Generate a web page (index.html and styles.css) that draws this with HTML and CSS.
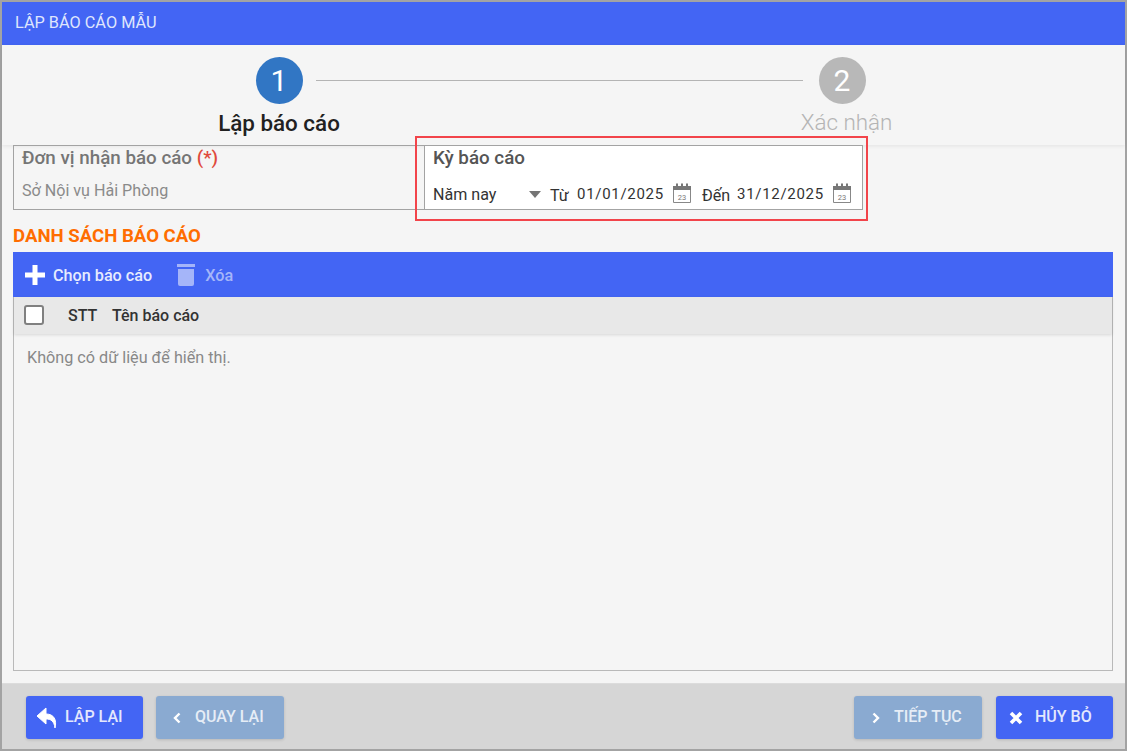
FILE: index.html
```html
<!DOCTYPE html>
<html lang="vi">
<head>
<meta charset="utf-8">
<title>Lập báo cáo mẫu</title>
<link rel="stylesheet" href="styles.css">
</head>
<body>
<div class="dialog">
  <header class="title-bar">LẬP BÁO CÁO MẪU</header>
  <section class="stepper">
    <div class="step step-one">
      <span class="badge badge-active">1</span>
      <span class="step-label step-label-active">Lập báo cáo</span>
    </div>
    <div class="step-line"></div>
    <div class="step step-two">
      <span class="badge badge-idle">2</span>
      <span class="step-label step-label-idle">Xác nhận</span>
    </div>
  </section>
  <main class="content">
    <div class="fields">
      <div class="field field-unit">
        <div class="field-title muted-title">Đơn vị nhận báo cáo <span class="required">(*)</span></div>
        <div class="unit-value">Sở Nội vụ Hải Phòng</div>
      </div>
      <div class="field field-period">
        <div class="field-title">Kỳ báo cáo</div>
        <div class="period-row">
          <span class="period-select">Năm nay</span>
          <span class="caret"></span>
          <span class="date-label label-from">Từ</span>
          <span class="date-value">01/01/2025</span>
          <svg class="cal" viewBox="0 0 20 20" width="20" height="20"><path d="M1.500 3.500h17v16h-17z" fill="#fff" stroke="#888" stroke-width="1"/><path d="M1 3h18v4H1z" fill="#777"/><path d="M5 0.500v3M10 0.500v3M15 0.500v3" stroke="#777" stroke-width="2"/><text x="10" y="16.500" class="cal-text">23</text></svg>
          <span class="date-label label-to">Đến</span>
          <span class="date-value">31/12/2025</span>
          <svg class="cal" viewBox="0 0 20 20" width="20" height="20"><path d="M1.500 3.500h17v16h-17z" fill="#fff" stroke="#888" stroke-width="1"/><path d="M1 3h18v4H1z" fill="#777"/><path d="M5 0.500v3M10 0.500v3M15 0.500v3" stroke="#777" stroke-width="2"/><text x="10" y="16.500" class="cal-text">23</text></svg>
        </div>
      </div>
      <div class="highlight"></div>
    </div>
    <h2 class="section-title">DANH SÁCH BÁO CÁO</h2>
    <div class="grid">
      <div class="toolbar">
        <span class="tool">
          <svg viewBox="0 0 20 20" width="20" height="20"><path d="M7.500 0h5v7.500H20v5h-7.500V20h-5v-7.500H0v-5h7.500z" fill="#fff"/></svg>
          <span>Chọn báo cáo</span>
        </span>
        <span class="tool tool-disabled">
          <svg viewBox="0 0 18 22" width="18" height="22"><path d="M0 0h18v3H0z" fill="#a5b5f9"/><path d="M1 5h16v15a2 2 0 0 1-2 2H3a2 2 0 0 1-2-2z" fill="#a5b5f9"/></svg>
          <span>Xóa</span>
        </span>
      </div>
      <div class="grid-head">
        <span class="checkbox"></span>
        <span class="col-stt">STT</span>
        <span class="col-name">Tên báo cáo</span>
      </div>
      <div class="grid-empty">Không có dữ liệu để hiển thị.</div>
    </div>
  </main>
  <footer class="footer">
    <div class="btn-group">
      <button class="btn btn-primary btn-reset">
        <svg viewBox="0 0 20 22" width="20" height="22"><path d="M9 1 0 9l9 8v-5c5 0 8 2 9 9 2-8-1-14-9-14z" fill="#fff" stroke="#fff" stroke-linejoin="round"/></svg>
        <span>LẬP LẠI</span>
      </button>
      <button class="btn btn-muted btn-back">
        <svg viewBox="0 0 8 12" width="8" height="12"><path d="M6.500 1.500 2 6l4.500 4.500" fill="none" stroke="#fff" stroke-width="2.400"/></svg>
        <span>QUAY LẠI</span>
      </button>
    </div>
    <div class="btn-group btn-group-right">
      <button class="btn btn-muted btn-next">
        <svg viewBox="0 0 8 12" width="8" height="12"><path d="M1.500 1.500 6 6l-4.500 4.500" fill="none" stroke="#fff" stroke-width="2.400"/></svg>
        <span>TIẾP TỤC</span>
      </button>
      <button class="btn btn-primary btn-cancel">
        <svg viewBox="0 0 14 14" width="14" height="14"><path d="M2 2l10 10M12 2 2 12" fill="none" stroke="#fff" stroke-width="3.600"/></svg>
        <span>HỦY BỎ</span>
      </button>
    </div>
  </footer>
</div>
</body>
</html>
```
FILE: styles.css
```css
* { box-sizing: border-box; }
html, body { height: 100%; }
body {
  margin: 0;
  font-family: Roboto, "Noto Sans", sans-serif;
  background: #f5f5f5;
  overflow: hidden;
}
.dialog {
  width: 1127px;
  height: 751px;
  border: 2px solid #a3a3a3;
  display: flex;
  flex-direction: column;
  background: #f5f5f5;
}
.title-bar {
  height: 43px;
  flex: none;
  background: #4365f4;
  color: #dfe5fd;
  font-size: 16.300px;
  line-height: 41px;
  padding-left: 13px;
}
.stepper {
  height: 100px;
  flex: none;
  display: flex;
  align-items: flex-start;
  padding-left: 177px;
  box-shadow: 0 1px 4px rgba(0,0,0,.08);
}
.step {
  display: flex;
  flex-direction: column;
  align-items: center;
  padding-top: 12px;
  width: 200px;
  flex: none;
}
.step-two { margin-left: -61px; }
.step-line {
  width: 487px;
  height: 1px;
  flex: none;
  background: #b4b4b4;
  margin: 35px 0 0 -63px;
}
.badge {
  width: 47px;
  height: 47px;
  border-radius: 50%;
  color: #fff;
  font-size: 30px;
  line-height: 47px;
  text-align: center;
  font-weight: 400;
}
.badge-active { background: #3176c4; }
.badge-idle { background: #b8b8b8; }
.step-label {
  font-size: 22.400px;
  line-height: 30px;
  margin-top: 4px;
  font-weight: 300;
  white-space: nowrap;
}
.step-label-active { color: #212121; font-weight: 500; }
.step-label-idle { color: #b4b4b4; margin-left: 9px; margin-top: 3px; }
.content {
  flex: 1;
  min-height: 0;
  padding: 0 12px 12px 11px;
  display: flex;
  flex-direction: column;
}
.fields {
  display: flex;
  height: 65px;
  flex: none;
  position: relative;
}
.field {
  border: 1px solid #a3a3a3;
  padding-top: 1px;
}
.field-unit { width: 411px; padding-left: 8px; border-right: 0; }
.field-period { width: 439px; padding-left: 8px; background: #fff; }
.field-title {
  font-size: 18.800px;
  line-height: 22px;
  font-weight: 500;
  color: #555;
}
.muted-title { color: #757575; }
.required { color: #e04a3c; }
.unit-value {
  font-size: 16.100px;
  line-height: 20px;
  color: #8a8a8a;
  margin-top: 12px;
}
.period-row {
  display: flex;
  align-items: center;
  height: 24px;
  margin-top: 13px;
  font-size: 16.100px;
  color: #333;
}
.period-select { width: 96px; }
.caret {
  width: 0;
  height: 0;
  border-left: 6.500px solid transparent;
  border-right: 6.500px solid transparent;
  border-top: 7px solid #757575;
  margin-right: 9px;
}
.date-label { font-size: 16.100px; position: relative; top: 1px; }
.label-from { width: 27px; }
.label-to { width: 35px; margin-left: 10px; }
.date-value { letter-spacing: .7px; width: 95px; font-size: 15px; }
.cal { flex: none; position: relative; top: -1px; }
.cal-text {
  font-family: Roboto, sans-serif;
  font-size: 7.500px;
  fill: #777;
  text-anchor: middle;
}
.highlight {
  position: absolute;
  left: 402px;
  top: -9px;
  width: 453px;
  height: 85px;
  border: 2px solid #f2444a;
  pointer-events: none;
}
.section-title {
  margin: 14px 0 0;
  font-size: 18.600px;
  line-height: 24px;
  height: 28px;
  color: #ff6d00;
  font-weight: 700;
}
.grid {
  flex: 1;
  min-height: 0;
  border: 1px solid #b9b9b9;
  border-top: 0;
  display: flex;
  flex-direction: column;
  width: 1100px;
}
.toolbar {
  height: 45px;
  flex: none;
  background: #4365f4;
  margin: 0 -1px;
  display: flex;
  align-items: center;
  padding-left: 12px;
  color: #fff;
  gap: 25px;
}
.tool {
  display: flex;
  align-items: center;
  gap: 8px;
  font-size: 16.200px;
  font-weight: 500;
  color: #e6ebfe;
}
.tool span { position: relative; top: 1px; }
.tool-disabled { color: #a5b5f9; gap: 10px; }
.grid-head {
  height: 37px;
  flex: none;
  background: #e8e8e8;
  box-shadow: 0 1px 3px rgba(0,0,0,.12);
  display: flex;
  align-items: center;
  padding: 0 0 1px 10px;
  font-size: 16px;
  font-weight: 500;
  color: #333;
}
.checkbox {
  width: 20px;
  height: 20px;
  border: 2.500px solid #808080;
  border-radius: 3px;
  background: #fff;
}
.col-stt { margin-left: 24px; width: 44px; }
.grid-empty {
  padding: 14px 13px;
  font-size: 16.200px;
  line-height: 20px;
  color: #888;
}
.footer {
  height: 66px;
  flex: none;
  background: #d6d6d6;
  border-top: 1px solid #dcdcdc;
  display: flex;
  justify-content: space-between;
  padding: 12px 12px 0 24px;
}
.btn-group { display: flex; gap: 13px; }
.btn-group-right { gap: 14px; }
.btn {
  height: 43px;
  border: 0;
  border-radius: 3px;
  font-family: inherit;
  font-size: 16px;
  font-weight: 500;
  color: #e3e8fd;
  display: flex;
  align-items: center;
  padding: 0;
  box-shadow: 0 1px 3px rgba(0,0,0,.14);
}
.btn span { position: relative; top: -1px; }
.btn-primary { background: #4365f4; }
.btn-muted { background: #8aaad1; color: #e6edf6; }
.btn-reset { width: 117px; padding-left: 11px; gap: 8px; }
.btn-back { width: 128px; padding-left: 17px; gap: 14px; }
.btn-next { width: 128px; padding-left: 18px; gap: 14px; }
.btn-cancel { width: 117px; padding-left: 13px; gap: 12px; }
```
